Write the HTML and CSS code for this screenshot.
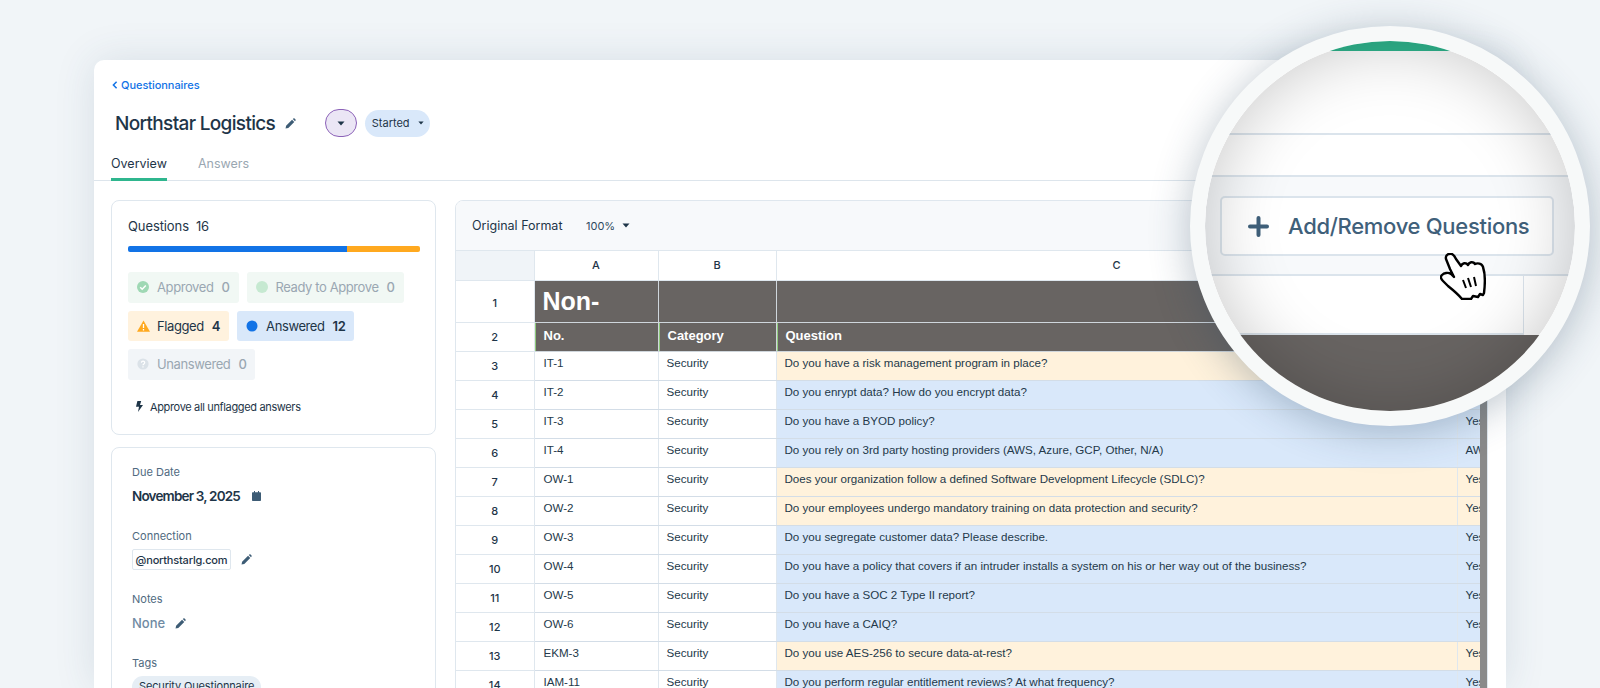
FILE: index.html
```html
<!DOCTYPE html>
<html lang="en">
<head>
<meta charset="utf-8">
<title>Northstar Logistics</title>
<link rel="stylesheet" href="styles.css">
</head>
<body>
<svg class="defs" width="0" height="0" aria-hidden="true">
  <symbol id="pencil" viewBox="0 0 12 12"><path d="M0.6 11.4l0.6-3L7.7 1.9l2.4 2.4-6.5 6.5zM8.5 1.1l0.7-0.6c0.4-0.3 0.9-0.3 1.2 0l1.1 1.1c0.3 0.3 0.3 0.8 0 1.2l-0.6 0.7z" fill="currentColor"/></symbol>
  <symbol id="caret" viewBox="0 0 8 5"><path d="M0.5 0.5h7L4 4.5z" fill="currentColor"/></symbol>
</svg>
<main class="card">
  <a class="back"><svg width="6" height="8" viewBox="0 0 6 8"><path d="M4.6 0.8L1.4 4l3.2 3.2" fill="none" stroke="currentColor" stroke-width="1.5"/></svg>Questionnaires</a>
  <header class="title-row">
    <h1>Northstar Logistics</h1>
    <svg class="pencil title-pencil"><use href="#pencil"/></svg>
    <span class="pill-purple"><svg class="caret"><use href="#caret"/></svg></span>
    <span class="pill-status">Started<svg class="caret"><use href="#caret"/></svg></span>
  </header>
  <nav class="tabs"><a class="tab active">Overview</a><a class="tab">Answers</a></nav>
  <div class="content">
    <aside class="side">
      <section class="box q-box">
        <div class="q-head"><span>Questions</span><span>16</span></div>
        <div class="bar"><i class="bar-blue"></i><i class="bar-orange"></i></div>
        <div class="chips">
          <span class="chip chip-green"><svg class="ico" viewBox="0 0 12 12"><circle cx="6" cy="6" r="6" fill="#9fd8b4"/><path d="M3.2 6.2l2 2 3.6-3.8" fill="none" stroke="#fff" stroke-width="1.5"/></svg>Approved<b>0</b></span>
          <span class="chip chip-green"><svg class="ico" viewBox="0 0 12 12"><circle cx="6" cy="6" r="6" fill="#c6e9d1"/></svg>Ready to Approve<b>0</b></span>
          <span class="chip chip-orange"><svg class="ico" viewBox="0 0 13 12"><path d="M6.5 0.4L13 11.8H0z" fill="#ffa91f"/><path d="M6.5 4v4M6.5 9v1.4" stroke="#fff" stroke-width="1.3"/></svg>Flagged<b>4</b></span>
          <span class="chip chip-blue"><svg class="ico" viewBox="0 0 12 12"><circle cx="6" cy="6" r="5.5" fill="#1273e6"/></svg>Answered<b>12</b></span>
          <span class="chip chip-grey"><svg class="ico" viewBox="0 0 12 12"><circle cx="6" cy="6" r="5.6" fill="#dbe2e8"/><path d="M4.4 4.7c0-2.1 3.3-2.1 3.3 0 0 1.2-1.7 1.2-1.7 2.5M6 8.2v1.3" fill="none" stroke="#fff" stroke-width="1.2"/></svg>Unanswered<b>0</b></span>
        </div>
        <a class="approve"><svg width="7" height="11" viewBox="0 0 7 11"><path d="M1.4 0h3.8L4 4h3L2 11l1-5.2H0z" fill="#1e3548"/></svg>Approve all unflagged answers</a>
      </section>
      <section class="box info-box">
        <div class="field"><span class="label">Due Date</span><div class="value date">November 3, 2025<svg class="cal" viewBox="0 0 9 10"><path d="M0 2.2c0-.6.4-1 1-1h1V0h1v1.2h3V0h1v1.2h1c.6 0 1 .4 1 1V9c0 .6-.4 1-1 1H1c-.6 0-1-.4-1-1z" fill="#3d5c75"/></svg></div></div>
        <div class="field"><span class="label">Connection</span><div class="value"><span class="conn">@northstarlg.com</span><svg class="pencil"><use href="#pencil"/></svg></div></div>
        <div class="field"><span class="label">Notes</span><div class="value none">None<svg class="pencil"><use href="#pencil"/></svg></div></div>
        <div class="field"><span class="label">Tags</span><div class="value"><span class="tag">Security Questionnaire</span></div></div>
      </section>
    </aside>
    <section class="sheet">
      <div class="sheet-bar"><span class="sheet-title">Original Format</span><span class="zoom-sel">100%<svg class="caret"><use href="#caret"/></svg></span></div>
      <div class="table-wrap">
        <table>
          <colgroup><col class="c0"><col class="c1"><col class="c2"><col class="c3"><col class="c4"></colgroup>
          <thead><tr><th class="corner"></th><th>A</th><th>B</th><th>C</th><th>D</th></tr></thead>
          <tbody>
            <tr class="r-title"><th>1</th><td>Non-</td><td></td><td></td><td></td></tr>
            <tr class="r-head"><th>2</th><td>No.</td><td>Category</td><td>Question</td><td></td></tr>
            <tr class="y"><th>3</th><td>IT-1</td><td>Security</td><td>Do you have a risk management program in place?</td><td>Yes</td></tr>
            <tr class="b"><th>4</th><td>IT-2</td><td>Security</td><td>Do you enrypt data? How do you encrypt data?</td><td>Yes</td></tr>
            <tr class="b"><th>5</th><td>IT-3</td><td>Security</td><td>Do you have a BYOD policy?</td><td>Yes</td></tr>
            <tr class="b"><th>6</th><td>IT-4</td><td>Security</td><td>Do you rely on 3rd party hosting providers (AWS, Azure, GCP, Other, N/A)</td><td>AWS</td></tr>
            <tr class="y"><th>7</th><td>OW-1</td><td>Security</td><td>Does your organization follow a defined Software Development Lifecycle (SDLC)?</td><td>Yes</td></tr>
            <tr class="y"><th>8</th><td>OW-2</td><td>Security</td><td>Do your employees undergo mandatory training on data protection and security?</td><td>Yes</td></tr>
            <tr class="b"><th>9</th><td>OW-3</td><td>Security</td><td>Do you segregate customer data? Please describe.</td><td>Yes</td></tr>
            <tr class="b"><th>10</th><td>OW-4</td><td>Security</td><td>Do you have a policy that covers if an intruder installs a system on his or her way out of the business?</td><td>Yes</td></tr>
            <tr class="b"><th>11</th><td>OW-5</td><td>Security</td><td>Do you have a SOC 2 Type II report?</td><td>Yes</td></tr>
            <tr class="b"><th>12</th><td>OW-6</td><td>Security</td><td>Do you have a CAIQ?</td><td>Yes</td></tr>
            <tr class="y"><th>13</th><td>EKM-3</td><td>Security</td><td>Do you use AES-256 to secure data-at-rest?</td><td>Yes</td></tr>
            <tr class="b"><th>14</th><td>IAM-11</td><td>Security</td><td>Do you perform regular entitlement reviews? At what frequency?</td><td>Yes</td></tr>
          </tbody>
        </table>
        <div class="scrollbar"></div>
      </div>
    </section>
  </div>
</main>
<div class="lens">
  <div class="lens-in">
    <div class="l-green"></div>
    <div class="l-top"></div>
    <div class="l-gap"></div>
    <div class="l-bar">
      <div class="l-btn"><svg width="21" height="21" viewBox="0 0 21 21"><path d="M10.500 2v17M2 10.500h17" stroke="#3f607a" stroke-width="4" stroke-linecap="round"/></svg><span>Add/Remove Questions</span></div>
    </div>
    <div class="l-white"></div>
    <div class="l-dark"></div>
  </div>
</div>
<svg class="hand" width="46" height="47" viewBox="0 0 46 47"><path d="M6 6C5 2 9 0 12 1c2 1 3 3 4 5l5 7c1-3 5-4 7-1 1-3 5-4 7-1 2-1 7-1 8 3 2 6 2 18 1 26l-1 2-3-1-2 3-5-1-2 3h-9c-4-5-9-9-14-13l-5-5c-2-2-3-4-1-6 2-2 6-3 9-1l3 3-4-8z" fill="#fff" stroke="#000" stroke-width="2.400" stroke-linejoin="round"/><path d="M23 27l3 8M28 25l3 9M34 24l2 9" stroke="#000" stroke-width="2" fill="none"/></svg>
</body>
</html>
```

FILE: styles.css
```css
* { box-sizing: border-box; }
html, body { margin: 0; height: 688px; overflow: hidden; }
body {
  background: #f1f5f8;
  font-family: Inter, "Liberation Sans", sans-serif;
  color: #1e3548;
  padding: 60px 94px 0;
  position: relative;
}
.defs { position: absolute; }
.card {
  background: #fff;
  border-radius: 10px 10px 0 0;
  height: 628px;
  box-shadow: 0 0 40px rgba(50, 80, 110, .13);
  padding-top: 18px;
  overflow: visible;
}
.back {
  display: flex;
  align-items: center;
  gap: 3px;
  margin-left: 18px;
  height: 14px;
  color: #1273e6;
  font-size: 11px;
  font-weight: 500;
  letter-spacing: -.05px;
}
.title-row {
  display: flex;
  align-items: center;
  height: 28px;
  margin: 17px 0 0 21px;
}
h1 { margin: 0; font-size: 19px; font-weight: 500; letter-spacing: -.67px; color: #1e3548; }
.pencil { width: 11px; height: 11px; color: #3d5c75; flex: none; }
.title-pencil { margin: 0 29px 0 10px; }
.caret { width: 8px; height: 5px; color: #1e3548; }
.pill-purple {
  width: 32px; height: 28px;
  border-radius: 14px;
  background: #ebe6f5;
  border: 1px solid #8c62b8;
  display: flex; align-items: center; justify-content: center;
}
.pill-status {
  margin-left: 8px;
  width: 65px; height: 27px;
  border-radius: 14px;
  background: #d9e8fa;
  font-size: 11px;
  display: flex; align-items: center; justify-content: center;
  gap: 8px;
}
.pill-status .caret { width: 6px; height: 4px; }
.tabs {
  display: flex;
  gap: 31px;
  height: 35px;
  margin-top: 9px;
  padding-left: 17px;
  border-bottom: 1px solid #dde5ec;
}
.tab {
  font-size: 12.500px;
  color: #9aa7b2;
  height: 35px;
  padding-top: 10px;
}
.tab.active { color: #1e3548; border-bottom: 3px solid #2fb68e; }
.content { display: flex; padding: 19px 0 0 17px; gap: 19px; }
.side { width: 325px; flex: none; display: flex; flex-direction: column; gap: 12px; }
.box { border: 1px solid #dfe7ee; border-radius: 8px; background: #fff; }
.q-box { height: 235px; padding: 17px 16px 0; }
.q-head { display: flex; gap: 7px; font-size: 13px; height: 18px; letter-spacing: -.1px; }
.bar { display: flex; height: 6px; margin-top: 10px; border-radius: 2px; overflow: hidden; width: 292px; }
.bar-blue { width: 219px; background: #1273e6; }
.bar-orange { flex: 1; background: #ffa91f; }
.chips { display: flex; flex-wrap: wrap; gap: 8px; margin-top: 20px; }
.chip {
  display: inline-flex;
  align-items: center;
  height: 30.500px;
  padding: 0 9px;
  border-radius: 3px;
  font-size: 13px;
  letter-spacing: -.4px;
  color: #1e3548;
}
.chip b { font-weight: 600; margin-left: 8px; }
.ico { width: 12px; height: 12px; margin-right: 8px; flex: none; }
.chip-green { background: #f1f8f4; color: #9aa7b2; }
.chip-orange { background: #fff2de; }
.chip-blue { background: #d9e8fa; }
.chip-grey { background: #f2f5f8; color: #9aa7b2; }
.chip-green b, .chip-grey b { font-weight: 500; }
.chip-orange .ico { width: 13px; margin-right: 7px; }
.approve {
  display: flex;
  align-items: center;
  gap: 7px;
  font-size: 11px;
  letter-spacing: -.35px;
  margin: 20px 0 0 8px;
}
.info-box { height: 260px; padding: 16px 20px 0; }
.field { height: 63.600px; }
.label { display: block; font-size: 11px; color: #4f6a80; line-height: 16px; }
.value { display: flex; align-items: center; margin-top: 4px; min-height: 24px; font-size: 13px; gap: 10px; }
.date { font-weight: 600; font-size: 13.500px; letter-spacing: -.82px; gap: 12px; }
.cal { width: 9px; height: 10px; }
.conn {
  border: 1px solid #dfe7ee;
  border-radius: 2px;
  font-size: 11px;
  font-weight: 500;
  letter-spacing: -.2px;
  height: 21px;
  width: 99px;
  display: flex; align-items: center; justify-content: center;
  white-space: nowrap;
}
.none { color: #6f8ba3; font-weight: 500; }
.tag {
  background: #e6eef5;
  border-radius: 11px;
  font-size: 11px;
  letter-spacing: -.15px;
  padding: 3px 7px;
  white-space: nowrap;
  height: 22px;
}
.sheet {
  width: 1033px;
  flex: none;
  border: 1px solid #dfe7ee;
  border-radius: 8px 8px 0 0;
  overflow: hidden;
  height: 500px;
}
.sheet-bar {
  height: 50px;
  background: #f7f9fb;
  border-bottom: 1px solid #dfe7ee;
  display: flex;
  align-items: center;
  padding-left: 16px;
  font-size: 12.500px;
}
.sheet-title { width: 114px; }
.zoom-sel { font-size: 11px; display: flex; align-items: center; gap: 7px; color: #2e4a60; }
.table-wrap { position: relative; width: 1032px; overflow: hidden; height: 450px; }
table {
  border-collapse: collapse;
  table-layout: fixed;
  width: 1024px;
  font-family: "Liberation Sans", Arial, sans-serif;
  font-size: 11.600px;
  color: #24394a;
}
.c0 { width: 78px; } .c1 { width: 124px; } .c2 { width: 118px; } .c3 { width: 681px; } .c4 { width: 23px; }
th, td { border: 1px solid #dfe7ee; overflow: hidden; white-space: nowrap; padding: 0; }
th { font-family: Inter, "Liberation Sans", sans-serif; font-weight: 500; font-size: 11px; text-align: center; vertical-align: middle; color: #1e3548; }
td { padding: 4px 8px 0 8px; vertical-align: top; height: 29px; }
td:nth-child(2) { padding-left: 9px; }
thead th { height: 29px; border-top: 0; }
tbody th:first-child, thead th:first-child { border-left: 0; }
.corner { background: #f0f4f8; }
.r-title th { padding-top: 3px; }
.r-title td { background: #686462; color: #fff; font-size: 25px; font-weight: 700; height: 42px; padding: 6px 8px 0 8px; border-color: #cfd6dc; }
.r-head td { background: #686462; color: #fff; font-size: 13px; font-weight: 700; padding: 5px 8px 0 9px; border-color: #cfd6dc; }
.r-head th { padding-top: 1px; }
.r-head td:nth-child(-n+4) { box-shadow: inset 1px 0 0 #8fc97a; }
.y td:nth-child(n+4) { background: #fff2dc; }
.b td:nth-child(n+4) { background: #d9e8fa; }
tr.y td, tr.b td { border-bottom-color: #d3dde7; border-top-color: #d3dde7; }
.y td:nth-child(n+5), .b td:nth-child(n+5) { border-left-color: #e4ebf1; }
.scrollbar { position: absolute; top: 0; right: 0; width: 8px; height: 100%; background: #8a8a8a; }
.lens {
  position: absolute;
  left: 1190px; top: 26px;
  width: 400px; height: 400px;
  border-radius: 50%;
  border: 15px solid #f7f9f9;
  box-shadow: 0 6px 40px rgba(45, 70, 95, .32);
  background: #fff;
}
.lens-in {
  height: 100%;
  border-radius: 50%;
  overflow: hidden;
  display: flex;
  flex-direction: column;
  position: relative;
  background: #fff;
}
.lens-in::after {
  content: "";
  position: absolute;
  inset: 0;
  border-radius: 50%;
  box-shadow: inset 0 0 70px rgba(0, 0, 0, .22);
}
.l-green { height: 10px; background: #2fb68e; flex: none; }
.l-top { height: 84px; border-bottom: 2px solid #dbe4ec; flex: none; }
.l-gap { height: 40px; flex: none; }
.l-bar {
  height: 101px;
  flex: none;
  background: #f7f9fb;
  border-top: 2px solid #dbe4ec;
  border-bottom: 2px solid #dbe4ec;
  padding: 19px 0 0 15px;
}
.l-btn {
  width: 334px;
  height: 60px;
  background: #fff;
  border: 2px solid #dbe4ec;
  border-radius: 5px;
  display: flex;
  align-items: center;
  padding-left: 26px;
  gap: 19px;
  color: #3f607a;
  font-size: 22px;
  font-weight: 500;
  letter-spacing: -.3px;
  white-space: nowrap;
}
.l-white { height: 59px; flex: none; border-right: 1px solid #dbe4ec; width: 319px; border-bottom: 2px solid #dbe4ec; }
.l-dark { flex: 1; background: #686462; }
.hand { position: absolute; left: 1440px; top: 253px; }
```
